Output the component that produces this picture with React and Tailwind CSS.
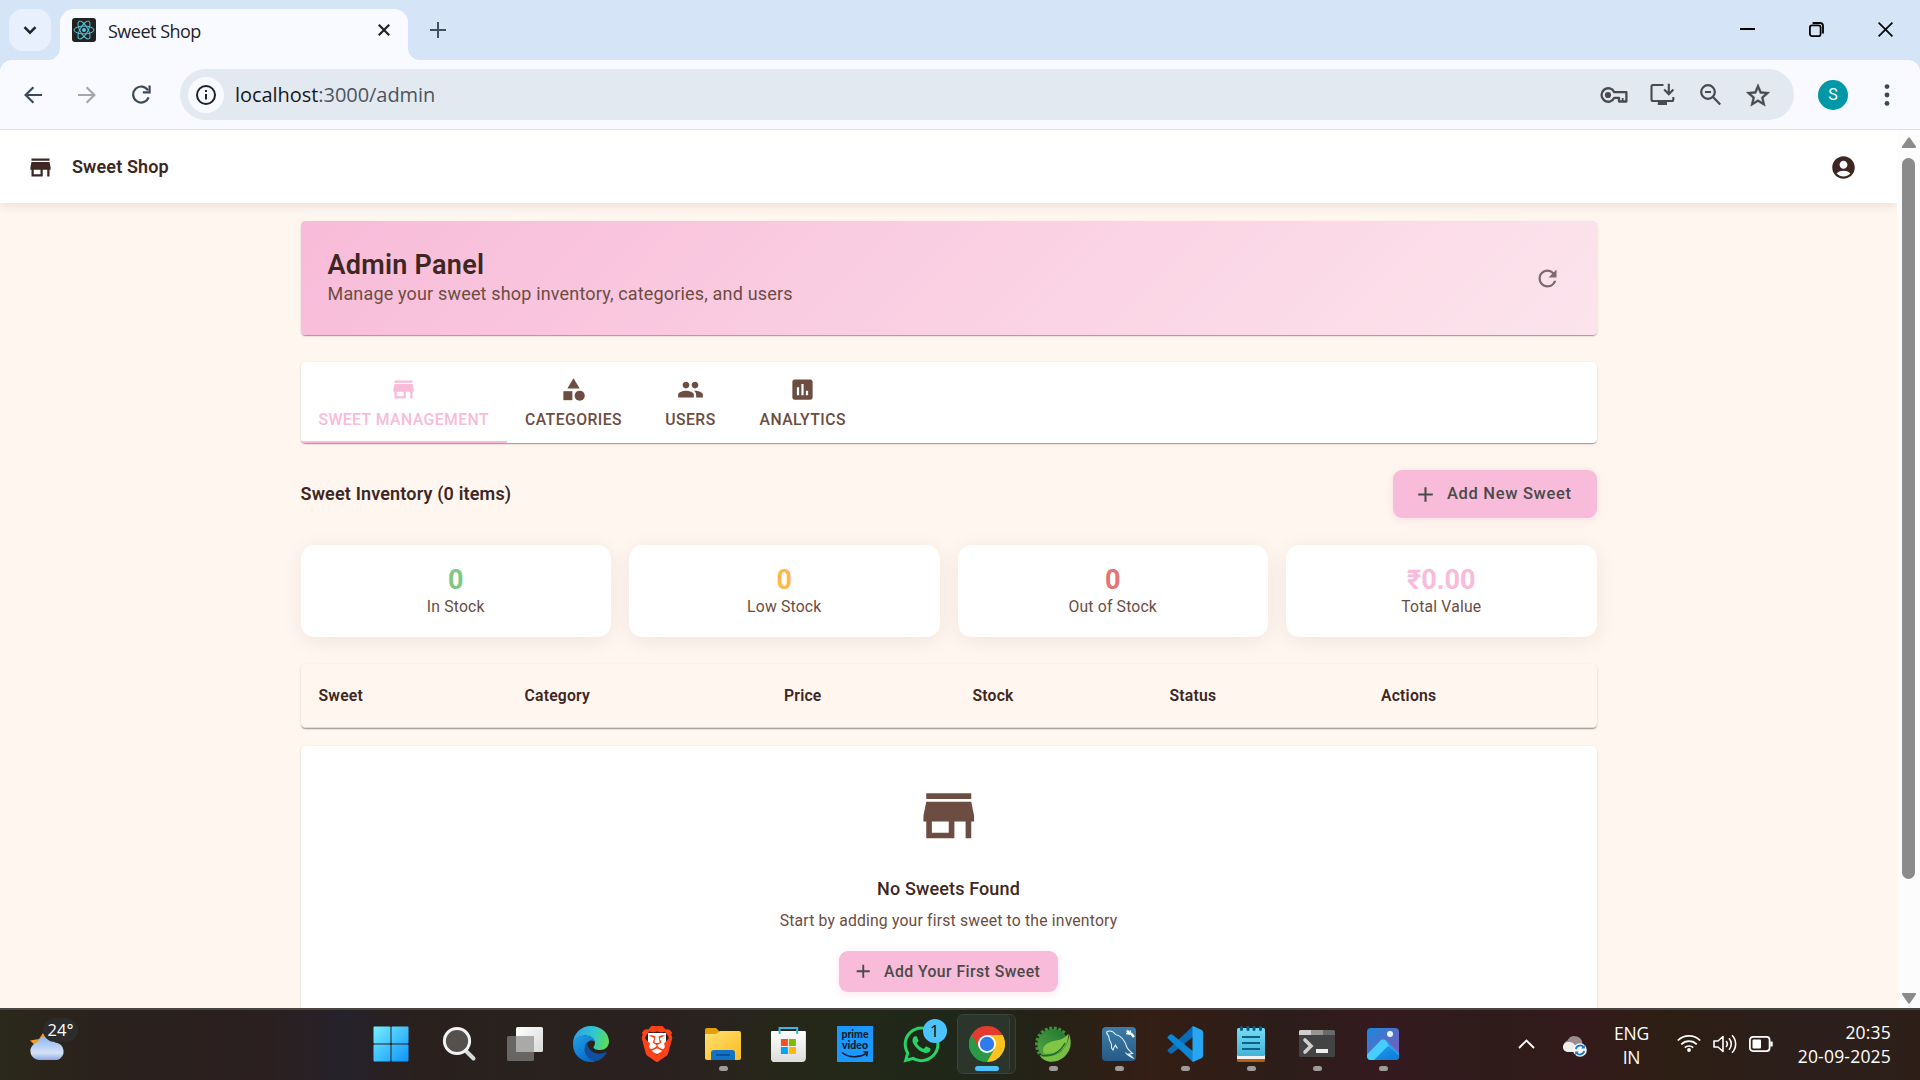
import React from "react";
import {
  MdStore, MdCategory, MdPeople, MdAssessment, MdAccountCircle, MdRefresh, MdAdd,
} from "react-icons/md";
import { SiBrave } from "react-icons/si";
import { FaWhatsapp } from "react-icons/fa";

/* ---------- browser chrome ---------- */

function TabStrip() {
  return (
    <div className="flex h-[60px] items-end bg-[#d5e4f7]">
      <div className="mb-[9px] ml-[9px] flex h-[42px] w-[42px] items-center justify-center rounded-[14px] bg-[#e8f0fe]">
        <svg width="14" height="14" viewBox="0 0 14 14" fill="none" stroke="#1f2328" strokeWidth="2.4">
          <path d="M1.5 4.2 7 9.7l5.5-5.5" />
        </svg>
      </div>
      <svg className="ml-[-3px]" width="12" height="12" viewBox="0 0 12 12"><path d="M12 0v12H0A12 12 0 0 0 12 0z" fill="#f8faff" /></svg>
      <div className="flex h-[51px] w-[348px] items-start rounded-t-[14px] bg-[#f8faff] pl-3 pr-[18px] pt-[9px]">
        <svg width="24" height="24" viewBox="0 0 24 24" fill="none" stroke="#58c4dc" strokeWidth="1">
          <rect width="24" height="24" rx="3" fill="#222" stroke="none" />
          <ellipse cx="12" cy="12" rx="10" ry="3.9" />
          <ellipse cx="12" cy="12" rx="10" ry="3.9" transform="rotate(60 12 12)" />
          <ellipse cx="12" cy="12" rx="10" ry="3.9" transform="rotate(120 12 12)" />
          <circle cx="12" cy="12" r="2" fill="#58c4dc" stroke="none" />
        </svg>
        <span className="ml-3 mt-[1px] w-[120px] whitespace-nowrap text-[18px] leading-6 tracking-[-0.5px] text-[#1f2328]">Sweet Shop</span>
        <svg className="ml-auto mt-[6px]" width="12" height="12" viewBox="0 0 12 12" stroke="#1f2328" strokeWidth="2.2"><path d="M.8.8l10.4 10.4M11.2.8.8 11.2" /></svg>
      </div>
      <svg width="12" height="12" viewBox="0 0 12 12"><path d="M0 0v12h12A12 12 0 0 1 0 0z" fill="#f8faff" /></svg>
      <svg className="mb-[22px] ml-[10px]" width="16" height="16" viewBox="0 0 16 16" stroke="#42505f" strokeWidth="2"><path d="M8 0v16M0 8h16" /></svg>
      <div className="ml-auto mb-[23px] mr-[27px] flex items-center gap-[54px]">
        <svg width="15" height="15" viewBox="0 0 15 15" stroke="#000" strokeWidth="2"><path d="M0 7h15" /></svg>
        <svg width="15" height="15" viewBox="0 0 15 15" fill="none" stroke="#000" strokeWidth="1.8">
          <rect x=".9" y="3.4" width="10.7" height="10.7" rx="2.2" />
          <path d="M3.6 1h7.4a3 3 0 0 1 3 3v7.4" />
        </svg>
        <svg width="15" height="15" viewBox="0 0 15 15" stroke="#000" strokeWidth="1.7"><path d="M.6.6l13.8 13.8M14.4.6.6 14.4" /></svg>
      </div>
    </div>
  );
}

function Toolbar() {
  return (
    <div className="h-[70px] bg-[#d5e4f7]">
      <div className="flex h-[70px] items-center rounded-t-[12px] border-b border-[#dbe2ea] bg-[#f8faff] pl-[24px]">
        <svg width="18" height="18" viewBox="0 0 18 18" fill="none" stroke="#3c4a58" strokeWidth="2.2"><path d="M18 9H1.8M9.4 1.2 1.6 9l7.8 7.8" /></svg>
        <svg className="ml-9" width="18" height="18" viewBox="0 0 18 18" fill="none" stroke="#a4a8ad" strokeWidth="2.2"><path d="M0 9h16.2M8.6 1.2 16.4 9l-7.8 7.8" /></svg>
        <svg className="ml-9" width="19" height="19" viewBox="0 0 19 19" fill="none" stroke="#3c4a58" strokeWidth="2.2">
          <path d="M16.6 12.4A8 8 0 1 1 16 5.4" /><path d="M17.6.6v6.8h-6.8" />
        </svg>
        <div className="ml-[29px] flex h-[51px] w-[1614px] items-center rounded-full bg-[#e3e9f1] pl-[8px] pr-[24px]">
          <div className="flex h-9 w-9 items-center justify-center rounded-full bg-[#f8faff]">
            <svg width="20" height="20" viewBox="0 0 20 20" fill="none" stroke="#1f2328" strokeWidth="2">
              <circle cx="10" cy="10" r="9" /><path d="M10 9v5.6M10 5v2.1" />
            </svg>
          </div>
          <span className="ml-[11px] whitespace-nowrap text-[20px] leading-[28px] tracking-[-0.05px] text-[#4d545c]">
            <span className="text-[#15181c]">localhost</span>:3000/admin
          </span>
          <div className="ml-auto flex items-center gap-[25px] text-[#474a4f]">
            <svg className="mr-[-3px]" width="28" height="18" viewBox="0 0 28 18" fill="none" stroke="currentColor" strokeWidth="2.3">
              <path d="M14.3 6.2A6.7 6.7 0 1 0 14.3 11.8H19V15.5H26.4V6.2z" strokeLinejoin="round" />
              <circle cx="8" cy="9" r="3.1" fill="currentColor" stroke="none" />
              <path d="M22.7 15.5v-3.5" strokeWidth="1.8" />
            </svg>
            <svg width="25" height="23" viewBox="0 0 25 23" fill="none" stroke="currentColor" strokeWidth="2.1">
              <path d="M13.5 2H3a1.5 1.5 0 0 0-1.5 1.5v13A1.5 1.5 0 0 0 3 18h18.8a1.5 1.5 0 0 0 1.5-1.5v-2.5" />
              <path d="M18.8.8v10M14.2 6.6l4.6 4.6 4.6-4.6" />
              <path d="M7.8 17.5h9.2v4.5H7.8z" fill="currentColor" stroke="none" />
            </svg>
            <svg width="21" height="22" viewBox="0 0 21 22" fill="none" stroke="currentColor" strokeWidth="2.2">
              <circle cx="8" cy="8" r="6.8" /><path d="M13 13l7.2 7.4M5 8h6" />
            </svg>
            <svg width="24" height="24" viewBox="1.8 1.3 20.4 20.4" fill="currentColor">
              <path d="M22 9.24l-7.19-.62L12 2 9.19 8.63 2 9.24l5.46 4.73L5.82 21 12 17.27 18.18 21l-1.63-7.03L22 9.24zM12 15.4l-3.76 2.27 1-4.28-3.32-2.88 4.38-.38L12 6.1l1.71 4.04 4.38.38-3.32 2.88 1 4.28L12 15.4z" stroke="currentColor" strokeWidth=".35" />
            </svg>
          </div>
        </div>
        <div className="ml-6 flex h-[30px] w-[30px] items-center justify-center rounded-full bg-[#0097a7] font-[Roboto] text-[16px] text-white">S</div>
        <svg className="ml-[36px]" width="6" height="22" viewBox="0 0 6 22" fill="#3c4a58">
          <circle cx="3" cy="2.6" r="2.4" /><circle cx="3" cy="11" r="2.4" /><circle cx="3" cy="19.4" r="2.4" />
        </svg>
      </div>
    </div>
  );
}

/* ---------- page ---------- */

const paper = "rounded-[4.5px] shadow-[0_2px_1px_-1px_rgba(0,0,0,0.2),0_1px_1px_0_rgba(0,0,0,0.14),0_1px_3px_0_rgba(0,0,0,0.12)]";

function Tab({ icon: Icon, label, active, width }) {
  return (
    <div className={`flex h-[81px] flex-col items-center justify-center gap-[6.75px] ${width} ${active ? "border-b-2 border-[#f8bbd9] pt-[2px] text-[#f8bbd9]" : "text-[#6d4c41]"}`}>
      <Icon size={27} />
      <span className="whitespace-nowrap text-[15.75px] font-medium leading-[1.25] tracking-[0.02857em]">{label}</span>
    </div>
  );
}

function Stat({ value, label, color }) {
  return (
    <div className="flex h-[92px] flex-col items-center rounded-[13.5px] bg-white pt-[19px] shadow-[0_4px_20px_rgba(62,39,35,0.08)]">
      <span className={`text-[27px] font-bold leading-[33px] ${color}`}>{value}</span>
      <span className="mt-[-1px] text-[15.75px] leading-[22px] tracking-[0.01071em] text-[#6d4c41]">{label}</span>
    </div>
  );
}

function Page() {
  return (
    <div className="flex h-[878px] overflow-hidden font-[Roboto,sans-serif]">
      <div className="h-full w-[1897px] overflow-hidden bg-[#fff6ef] text-[#3e2723]">
        <header className="flex h-[73px] items-center bg-white pl-[27px] pr-[40px] pt-[1px] shadow-[0_2px_10px_rgba(62,39,35,0.12)]">
          <MdStore size={27} />
          <span className="ml-[18px] mt-[-1px] text-[18px] font-semibold tracking-[0.0075em]">Sweet Shop</span>
          <MdAccountCircle className="ml-auto" size={27} />
        </header>
        <main className="mx-auto mt-[18px] w-[1296px]">
          <section className={`flex h-[114px] items-center justify-between bg-linear-[135deg,#f8bbd9_0%,#fce4ec_100%] pl-[27px] pr-[36px] ${paper}`}>
            <div>
              <h1 className="pt-[1px] text-[27px] font-semibold leading-[33px] tracking-[0.01em]">Admin Panel</h1>
              <p className="mt-[-2px] pb-[1px] text-[18px] leading-[27px] tracking-[0.00938em] text-[#6d4c41]">Manage your sweet shop inventory, categories, and users</p>
            </div>
            <MdRefresh size={27} className="text-[#7a696e]" />
          </section>

          <nav className={`mt-[27px] flex h-[81px] bg-white ${paper}`}>
            <Tab icon={MdStore} label="SWEET MANAGEMENT" active width="w-[206.5px]" />
            <Tab icon={MdCategory} label="CATEGORIES" width="w-[133px]" />
            <Tab icon={MdPeople} label="USERS" width="w-[101px]" />
            <Tab icon={MdAssessment} label="ANALYTICS" width="w-[123.5px]" />
          </nav>

          <div className="mt-[27px] flex h-[48px] items-center justify-between">
            <h2 className="mt-[-2px] text-[18px] font-semibold tracking-[0.009em]">Sweet Inventory (0 items)</h2>
            <button className="flex h-[48px] w-[204px] items-center rounded-[9px] bg-[#f8bbd9] pl-[20px] text-[#4a4a4a] shadow-[0_2px_8px_rgba(248,187,217,0.4)]">
              <MdAdd size={25} />
              <span className="ml-[9.5px] whitespace-nowrap text-[16.5px] font-medium tracking-[0.67px]">Add New Sweet</span>
            </button>
          </div>

          <div className="mt-[27px] grid grid-cols-4 gap-[18px]">
            <Stat value="0" label="In Stock" color="text-[#81c784]" />
            <Stat value="0" label="Low Stock" color="text-[#ffb74d]" />
            <Stat value="0" label="Out of Stock" color="text-[#e57373]" />
            <Stat value="₹0.00" label="Total Value" color="text-[#f8bbd9]" />
          </div>

          <div className={`mt-[27px] grid h-[64px] grid-cols-[206px_259.5px_188.5px_197px_211.5px_1fr] items-center border-b border-[#e0dad6] bg-[#fff6ef] pl-[18px] text-[15.75px] font-semibold tracking-[0.0125em] ${paper}`}>
            <span>Sweet</span><span>Category</span><span>Price</span><span>Stock</span><span>Status</span><span>Actions</span>
          </div>

          <section className={`mt-[18px] flex h-[290px] flex-col items-center bg-white pt-[36px] ${paper}`}>
            <MdStore size={67.5} className="text-[#6d4c41]" />
            <h3 className="mt-[25px] text-[18px] font-medium leading-[27px] tracking-[0.0075em]">No Sweets Found</h3>
            <p className="mt-[8px] text-[15.75px] leading-[22px] tracking-[0.01071em] text-[#6d4c41]">Start by adding your first sweet to the inventory</p>
            <button className="mt-[19px] flex h-[41px] w-[219px] items-center rounded-[9px] bg-[#f8bbd9] pl-[13px] text-[#4a4a4a] shadow-[0_2px_8px_rgba(248,187,217,0.4)]">
              <MdAdd size={22.5} />
              <span className="ml-[9.5px] mt-[1px] whitespace-nowrap text-[15.75px] font-medium tracking-[0.45px]">Add Your First Sweet</span>
            </button>
          </section>
        </main>
      </div>
      <div className="flex w-[23px] flex-col items-center bg-[#fcfcfc] pt-[7px]">
        <svg width="14" height="11" viewBox="0 0 14 11" fill="#8b8b8b"><path d="M6 .9a1.2 1.2 0 0 1 2 0l5.8 8.3a1.1 1.1 0 0 1-.9 1.8H1.1a1.1 1.1 0 0 1-.9-1.8z" /></svg>
        <div className="mt-[10px] h-[721px] w-[13px] rounded-full bg-[#8b8b8b]" />
        <svg className="mt-auto mb-1" width="14" height="11" viewBox="0 0 14 11" fill="#8b8b8b"><path d="M6 10.1a1.2 1.2 0 0 0 2 0l5.8-8.3A1.1 1.1 0 0 0 12.9 0H1.1a1.1 1.1 0 0 0-.9 1.8z" /></svg>
      </div>
    </div>
  );
}

/* ---------- taskbar ---------- */

function TaskIcon({ children, dot, active, cell = "w-[66px]" }) {
  return (
    <div className={`relative flex h-full items-center justify-center ${cell}`}>
      {active && (
        <>
          <div className="absolute left-[9px] top-[4px] h-[60px] w-[53px] rounded-[6px] border border-[#3a4034] bg-[#262e24]" />
          <div className="absolute left-[3px] top-[4px] h-[60px] w-[53px] rounded-[6px] border border-[#3c4338] bg-[#2c352b]" />
        </>
      )}
      <div className="relative">{children}</div>
      {dot && <div className="absolute bottom-[7px] left-[29px] h-[5px] w-[9px] rounded-full bg-[#a09a98]" />}
      {active && <div className="absolute bottom-[7px] left-[21px] h-[5px] w-[24px] rounded-full bg-[#4cc2ff]" />}
    </div>
  );
}

const S = ({ children }) => (
  <svg className="block" width="36" height="36" viewBox="0 0 36 36" fill="none">{children}</svg>
);

const teeth = Array.from({ length: 11 }, (_, i) => 150 + i * 16);

function Taskbar() {
  return (
    <footer className="flex h-[72px] border-t-2 border-[#4a4541] bg-linear-[90deg,#2a291b_0%,#2a211c_5%,#2b1f20_14%,#25222a_18%,#2a201d_22%,#28221d_27%,#2b2020_34%,#252818_42%,#1f2718_50%,#242216_54%,#341e15_60%,#2c1d19_67%,#351a20_72%,#2e1c19_78%,#351a1b_82%,#2d1f14_87%,#2c1e1b_94%,#2d1f18_100%] text-white">
      <div className="relative ml-[29px] w-[60px] pt-[14px]">
        <svg className="mt-[8px]" width="38" height="30" viewBox="0 0 38 30">
          <defs><linearGradient id="cl" x1="0" y1="0" x2="0" y2="1"><stop offset="0" stopColor="#8db4f0" /><stop offset=".7" stopColor="#d5e2f8" /><stop offset="1" stopColor="#8aaae8" /></linearGradient></defs>
          <path d="M1 8.5 10 7l4-6 5 7-6 9-5-2z" fill="#f59a20" />
          <path d="M10 28a9 9 0 0 1-1.5-17.8A9.5 9.5 0 0 1 26 10.5 8.9 8.9 0 0 1 28 28z" fill="url(#cl)" />
        </svg>
        <div className="absolute left-[14px] top-[8px] flex h-[24px] w-[35px] items-center justify-center rounded-full bg-[#2c2c2c] text-[16.5px]">24°</div>
      </div>
      <div className="ml-[269px] flex h-full pb-[2px]">
        <TaskIcon>
          <S>
            <defs><linearGradient id="w" x1="0" y1="0" x2="36" y2="36" gradientUnits="userSpaceOnUse"><stop stopColor="#78f0ff" /><stop offset="1" stopColor="#0a92fa" /></linearGradient></defs>
            <g fill="url(#w)"><rect x=".5" y=".5" width="17" height="17" rx="1" /><rect x="18.5" y=".5" width="17" height="17" rx="1" /><rect x=".5" y="18.5" width="17" height="17" rx="1" /><rect x="18.5" y="18.5" width="17" height="17" rx="1" /></g>
          </S>
        </TaskIcon>
        <TaskIcon cell="w-[68px] pl-[2px]">
          <S>
            <path d="M25 25l7.5 7.5" stroke="#d5dadd" strokeWidth="4" strokeLinecap="round" />
            <circle cx="16" cy="15" r="12.6" fill="#54504e" stroke="#f1f3f4" strokeWidth="3" />
          </S>
        </TaskIcon>
        <TaskIcon>
          <S>
            <defs><linearGradient id="tv" x1="0" y1="0" x2="1" y2="1"><stop stopColor="#fff" /><stop offset="1" stopColor="#d8d8d8" /></linearGradient></defs>
            <rect x="0" y="10" width="27" height="25" rx="1.5" fill="#686665" />
            <rect x="9" y="1" width="27" height="25" rx="1.5" fill="url(#tv)" />
            <rect x="9" y="10" width="18" height="16" fill="#a9a9a9" />
          </S>
        </TaskIcon>
        <TaskIcon>
          <S>
            <defs>
              <linearGradient id="e1" x1="4" y1="8" x2="36" y2="16" gradientUnits="userSpaceOnUse"><stop stopColor="#2fa6e6" /><stop offset=".5" stopColor="#30c8cc" /><stop offset="1" stopColor="#62dc4e" /></linearGradient>
              <linearGradient id="e2" x1="2" y1="12" x2="20" y2="34" gradientUnits="userSpaceOnUse"><stop stopColor="#1b9de2" /><stop offset="1" stopColor="#0a66c8" /></linearGradient>
            </defs>
            <path d="M0 18C0 7.5 8 0 18 0s18 7 18 15.5c0 5-4 8.5-9 8.5-4 0-6.5-1.5-6.5-2.8 0-.9 1.5-1.7 1.5-4.2C22 13 18 9.5 12 9.5 6 9.5 1 13 0 18z" fill="url(#e1)" />
            <path d="M0 18.5C0 13 5.5 9.5 12 9.5c5.5 0 9.5 2.8 10 6.5-3-3.5-9-1-9.5 4.5C12 28 19 35 23 35c-2 1-4 1-5 1C8 36 0 28.5 0 18.5z" fill="url(#e2)" />
            <path d="M14 16.5c-4 4-3 11 1 15 4 4.2 9.5 4.5 13 1.5 2.7-1.8 4.5-4 5.4-6 .3-.8-.4-1-1-.7C25 30 15 26 14 16.5z" fill="#124f9e" />
          </S>
        </TaskIcon>
        <TaskIcon>
          <div className="relative flex h-9 w-9 items-center justify-center">
            <div className="absolute left-[9px] top-[7px] h-[21px] w-[18px] rounded-b-full bg-white" />
            <SiBrave size={36} className="relative text-[#fb4218]" />
          </div>
        </TaskIcon>
        <TaskIcon dot>
          <S>
            <defs><linearGradient id="fo" x1="0" y1="0" x2="1" y2="1"><stop stopColor="#ffe073" /><stop offset="1" stopColor="#fbbc1f" /></linearGradient></defs>
            <path d="M0 4a2 2 0 0 1 2-2h9l4 4v6H0z" fill="#e3a008" />
            <path d="M0 8h11l4-3h19a2 2 0 0 1 2 2v25a2 2 0 0 1-2 2H2a2 2 0 0 1-2-2z" fill="url(#fo)" />
            <path d="M6 34v-7a3 3 0 0 1 3-3h18a3 3 0 0 1 3 3v7z" fill="#1272c4" />
            <path d="M11 29h14" stroke="#0a4a8c" strokeWidth="1.6" />
          </S>
        </TaskIcon>
        <TaskIcon>
          <S>
            <defs><linearGradient id="st" x1="0" y1="0" x2="0" y2="1"><stop stopColor="#fff" /><stop offset="1" stopColor="#dcdcdc" /></linearGradient></defs>
            <g transform="translate(-.6 0)">
              <path d="M.5 6a1 1 0 0 1 1-1h33a1 1 0 0 1 1 1v26a4 4 0 0 1-4 4h-27a4 4 0 0 1-4-4z" fill="url(#st)" />
              <path d="M9.2 8V2h17.6v6" stroke="#38b8ea" strokeWidth="2" />
              <path d="M10.5 13h7v7h-7z" fill="#f25022" /><path d="M18.5 13h7v7h-7z" fill="#7fba00" /><path d="M10.5 21h7v7h-7z" fill="#00a4ef" /><path d="M18.5 21h7v7h-7z" fill="#ffb900" />
            </g>
          </S>
        </TaskIcon>
        <TaskIcon>
          <div className="flex h-9 w-9 flex-col items-center bg-[#1a98ff] pt-[3px] font-[Lato,sans-serif] text-[10.5px] font-black leading-[11px] text-[#0c1b2b]">
            <span>prime</span><span>video</span>
            <svg width="28" height="8" viewBox="0 0 28 8" fill="none" stroke="#0c1b2b" strokeWidth="1.5"><path d="M1 1.5c7 5.6 17 5.6 24 1.2M22.5.8l4 .4-1 4" /></svg>
          </div>
        </TaskIcon>
        <TaskIcon>
          <FaWhatsapp size={41} className="text-[#25d366]" />
          <div className="absolute left-[22px] top-[-5px] flex h-6 w-6 items-center justify-center rounded-full bg-[#4cc2ff] text-[16px] text-black">1</div>
        </TaskIcon>
        <TaskIcon active>
          <S>
            <path d="M18 18 2.41 9A18 18 0 0 1 33.59 9z" fill="#e33b2e" />
            <path d="M18 18 33.59 9A18 18 0 0 1 18 36z" fill="#fcc31e" />
            <path d="M18 18 18 36A18 18 0 0 1 2.41 9z" fill="#2a9a48" />
            <path d="M18 9h15.59L36 18 24 20z" fill="#fcc31e" />
            <path d="M10.2 22.5 2.41 9l9-1L18 9v6z" fill="#e33b2e" />
            <path d="M10.2 22.5 2.41 9A18 18 0 0 0 18 36l7.8-13.5-8 3z" fill="#2a9a48" />
            <circle cx="18" cy="18" r="9" fill="#fff" /><circle cx="18" cy="18" r="7.2" fill="#2f7bee" />
          </S>
        </TaskIcon>
        <TaskIcon dot>
          <S>
            <defs><linearGradient id="sp" x1="0" y1="1" x2="1" y2="0"><stop stopColor="#58a845" /><stop offset="1" stopColor="#1c7430" /></linearGradient></defs>
            <circle cx="18" cy="18.5" r="15.5" fill="url(#sp)" />
            {teeth.map((a) => <rect key={a} x="33" y="17" width="3" height="3" fill="#3f9038" transform={`rotate(${a} 18 18.5)`} />)}
            <path d="M34 8c3.5 9 1.5 18-5.5 23.5C20.5 38 8.5 37 4.5 29c8 3 18 1 23-5 5-5 6-10 6.5-16z" fill="#76bf43" />
            <path d="M33.5 7.5c-5 7-12 6.5-18 8.5-7 2.5-9 7.5-6.5 11.5 8 1 16-.5 20-6 3.5-4.5 4-9 4.5-14z" fill="#80c546" />
            <path d="M6.5 29.5c9 1.5 19-3 23.5-12.5" stroke="#1f6b2a" strokeWidth="1.5" />
          </S>
        </TaskIcon>
        <TaskIcon dot>
          <S>
            <defs><linearGradient id="my" x1="0" y1="0" x2="0" y2="1"><stop stopColor="#3c7da8" /><stop offset="1" stopColor="#285a86" /></linearGradient></defs>
            <rect x="1" y="1" width="34" height="34" rx="4" fill="url(#my)" />
            <path d="M5.5 6c3.5-2 7-.5 9 2.5 5.5 1 9.5 6.5 11.5 13 1 2.3 3.5 4 5.5 6l-4 .5c1.5 1 3.5 2.3 4.5 4-3-1.5-6-3-7.5-5.5" stroke="#e3eef5" strokeWidth="1.1" />
            <path d="M5.5 6c0 2.5 2.5 3 2.5 6 .5 3.5 2.5 4.5 2.5 7-.5 2 .5 4 1.5 5 .5-2 1.5-3.5 2.5-5 .5 1.5 1.5 2.5 2 3.5" stroke="#e3eef5" strokeWidth="1.1" />
            <path d="M26 4.5l2 2.5 2.5 1 2.5 3" stroke="#fff" strokeWidth="2.4" /><path d="M25 7.5l3.5.5 1-3.5" stroke="#fff" strokeWidth="1.4" />
          </S>
        </TaskIcon>
        <TaskIcon dot>
          <S>
            <path d="M26 0 1 23.5a1.3 1.3 0 0 0 0 1.9l2.2 2a1.5 1.5 0 0 0 2 0L27 10z" fill="#0a6cb4" />
            <path d="M26 36 1 12.5a1.3 1.3 0 0 1 0-1.9l2.2-2a1.5 1.5 0 0 1 2 0L27 26z" fill="#0b86d4" />
            <path d="M26 0l8.7 4.1A2 2 0 0 1 36 6v24a2 2 0 0 1-1.3 1.9L26 36c-.6-.5-.5-1-.5-1.5v-33c0-.5 0-1 .5-1.5z" fill="#27a6f2" />
          </S>
        </TaskIcon>
        <TaskIcon dot>
          <S>
            <defs><linearGradient id="np" x1="0" y1="0" x2="0" y2="1"><stop stopColor="#76dcf5" /><stop offset="1" stopColor="#42b4d8" /></linearGradient></defs>
            <rect x="4" y="26" width="28" height="10" rx="1.5" fill="#b85e12" /><rect x="4" y="24" width="28" height="9" fill="#f0f0f0" />
            <rect x="4" y="2" width="28" height="28" rx="1.5" fill="url(#np)" />
            <path d="M9 11h18M9 17h18M9 23h18" stroke="#0a6088" strokeWidth="2" />
            <path d="M8.5 1.5v2M15 1.5v2M21 1.5v2M27.5 1.5v2" stroke="#0c5f80" strokeWidth="3" strokeLinecap="round" />
          </S>
        </TaskIcon>
        <TaskIcon dot>
          <S>
            <rect x="0" y="4" width="36" height="27" rx="1.5" fill="#434343" />
            <path d="M0 5.5A1.5 1.5 0 0 1 1.5 4H12v5H0z" fill="#cfcfcf" /><path d="M12 4h12v5H12z" fill="#959595" /><path d="M24 4h10.5A1.5 1.5 0 0 1 36 5.5V9H24z" fill="#6a6a6a" />
            <path d="M6 14l6 6-6 6" stroke="#d0d0d0" strokeWidth="3.6" strokeLinecap="round" /><path d="M17 25h12" stroke="#eee" strokeWidth="4" />
          </S>
        </TaskIcon>
        <TaskIcon dot>
          <S>
            <defs>
              <linearGradient id="ph" x1="0" y1="0" x2="1" y2="1"><stop stopColor="#1789e0" /><stop offset="1" stopColor="#8b55b0" /></linearGradient>
              <linearGradient id="ph2" x1="0" y1="0" x2="1" y2="1"><stop stopColor="#1d9cf0" /><stop offset="1" stopColor="#0f78d4" /></linearGradient>
            </defs>
            <rect x="2" y="2" width="32" height="32" rx="4" fill="url(#ph)" />
            <path d="M2 28.5 15 15a4.5 4.5 0 0 1 6.5 0L34 27.5V30a4 4 0 0 1-4 4H6a4 4 0 0 1-4-4z" fill="#45cdfb" />
            <path d="M9 34 21.5 21.5a3 3 0 0 1 4 0L34 29.5v.5a4 4 0 0 1-4 4z" fill="url(#ph2)" />
            <path d="M21.5 15 34 27.5v2L24 20z" fill="#1f9ff0" />
            <circle cx="25" cy="8" r="3" fill="#eef6ff" />
          </S>
        </TaskIcon>
      </div>
      <div className="ml-auto mr-[29px] flex h-full items-center pb-[2px] text-[17px] leading-[24px]">
        <svg width="17" height="10" viewBox="0 0 17 10" fill="none" stroke="#fff" strokeWidth="1.9"><path d="M1 9l7.5-7.5L16 9" /></svg>
        <svg className="ml-[27px] mt-[4px]" width="25" height="21" viewBox="0 0 25 21">
          <path d="M6 15a5.5 5.5 0 0 1-.5-10.5A8 8 0 0 1 20 5l1 10z" fill="#9c8c8c" />
          <path d="M5 16a5 5 0 0 1-1-9.5c3-1 6-.5 8 1.5l5 8z" fill="#eee" />
          <circle cx="18" cy="14" r="6.8" fill="#f4f8fc" />
          <path d="M13.8 13a4.4 4.4 0 0 1 8-1.5M22.2 15a4.4 4.4 0 0 1-8 1.5" stroke="#1875d0" strokeWidth="1.7" fill="none" />
          <path d="M22.8 8.8v3.6h-3.6zM13.2 19.2v-3.6h3.6z" fill="#1875d0" />
        </svg>
        <div className="ml-[26px] mt-[1px] w-[37px] text-center text-[17.5px] tracking-[-0.2px]"><div>ENG</div><div>IN</div></div>
        <svg className="ml-[27px] mt-[-2px]" width="24" height="18" viewBox="0 0 24 18" fill="none" stroke="#fff" strokeWidth="1.7">
          <path d="M.8 6.5a15.8 15.8 0 0 1 22.4 0M4.3 10.3a10.9 10.9 0 0 1 15.4 0M7.8 13.7a6 6 0 0 1 8.4 0" /><circle cx="12" cy="16" r="1.9" fill="#fff" stroke="none" />
        </svg>
        <svg className="ml-[12px]" width="24" height="20" viewBox="0 0 24 20" fill="none" stroke="#fff" strokeWidth="1.6">
          <path d="M1 7h4l5-4.5v15L5 13H1z" strokeLinejoin="round" /><path d="M13 7a4.5 4.5 0 0 1 0 6M16 4.2a8.5 8.5 0 0 1 0 11.6M19 1.2a12.5 12.5 0 0 1 0 17.6" />
        </svg>
        <svg className="ml-[12px]" width="25" height="16" viewBox="0 0 25 16" fill="none" stroke="#fff" strokeWidth="1.8">
          <rect x=".9" y=".9" width="19.7" height="14.2" rx="3" /><rect x="3.5" y="3.5" width="8.5" height="9" rx="1" fill="#fff" stroke="none" /><path d="M22.5 5.5v5" strokeWidth="2.4" />
        </svg>
        <div className="ml-[22px] w-[95px] whitespace-nowrap text-right text-[17.5px] tracking-[0.2px]"><div>20:35</div><div>20-09-2025</div></div>
      </div>
    </footer>
  );
}

export default function App() {
  return (
    <div className="flex h-[1080px] w-[1920px] flex-col overflow-hidden font-['Open_Sans','Noto_Sans',sans-serif]">
      <TabStrip />
      <Toolbar />
      <Page />
      <Taskbar />
    </div>
  );
}
